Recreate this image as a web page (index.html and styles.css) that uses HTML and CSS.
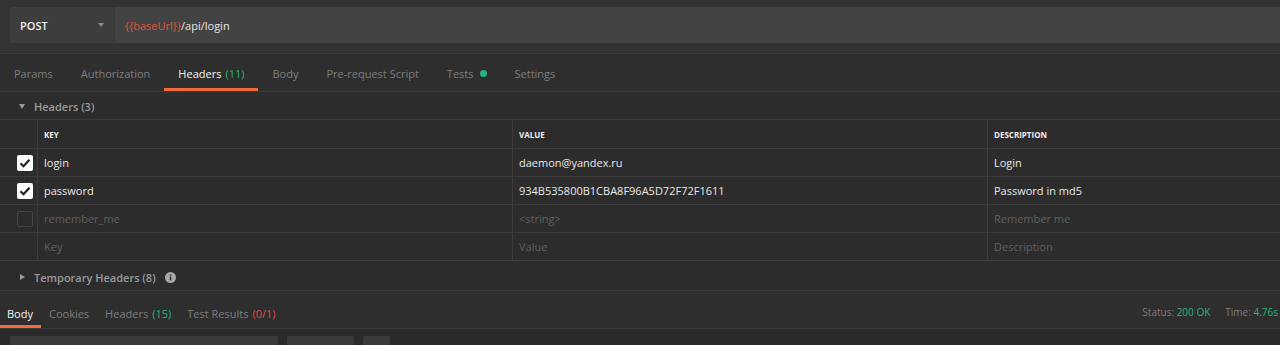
FILE: index.html
```html
<!DOCTYPE html>
<html lang="en">
<head>
  <meta charset="UTF-8">
  <title>Request</title>
  <link rel="stylesheet" href="styles.css">
</head>
<body>
  <div class="url-bar">
    <div class="url-bar__field">
      <div class="method">
        <span class="method__text">POST</span>
        <span class="method__caret"></span>
      </div>
      <div class="url"><span class="url__var">{{baseUrl}}</span>/api/login</div>
    </div>
  </div>

  <nav class="tabs">
    <span class="tabs__item">Params</span>
    <span class="tabs__item">Authorization</span>
    <span class="tabs__item tabs__item--active">Headers <span class="count count--green">(11)</span></span>
    <span class="tabs__item">Body</span>
    <span class="tabs__item">Pre-request Script</span>
    <span class="tabs__item">Tests <span class="dot"></span></span>
    <span class="tabs__item">Settings</span>
  </nav>

  <div class="section">
    <span class="caret caret--down"></span>
    <span class="section__title">Headers (3)</span>
  </div>

  <div class="table">
    <div class="table__row table__row--head">
      <div class="table__cell table__cell--check"></div>
      <div class="table__cell">KEY</div>
      <div class="table__cell">VALUE</div>
      <div class="table__cell">DESCRIPTION</div>
    </div>
    <div class="table__row">
      <div class="table__cell table__cell--check"><span class="checkbox checkbox--on"></span></div>
      <div class="table__cell">login</div>
      <div class="table__cell">daemon@yandex.ru</div>
      <div class="table__cell">Login</div>
    </div>
    <div class="table__row">
      <div class="table__cell table__cell--check"><span class="checkbox checkbox--on"></span></div>
      <div class="table__cell">password</div>
      <div class="table__cell">934B535800B1CBA8F96A5D72F72F1611</div>
      <div class="table__cell">Password in md5</div>
    </div>
    <div class="table__row table__row--off">
      <div class="table__cell table__cell--check"><span class="checkbox"></span></div>
      <div class="table__cell">remember_me</div>
      <div class="table__cell">&lt;string&gt;</div>
      <div class="table__cell">Remember me</div>
    </div>
    <div class="table__row table__row--off">
      <div class="table__cell table__cell--check"></div>
      <div class="table__cell">Key</div>
      <div class="table__cell">Value</div>
      <div class="table__cell">Description</div>
    </div>
  </div>

  <div class="section section--temp">
    <span class="caret caret--right"></span>
    <span class="section__title">Temporary Headers (8)</span>
    <svg class="info" width="11" height="11" viewBox="0 0 11 11">
      <circle cx="5.5" cy="5.5" r="5.5" fill="#a8a8a8"/>
      <rect x="4.8" y="4.6" width="1.5" height="3.8" fill="#2c2c2c"/>
      <rect x="4.8" y="2.4" width="1.5" height="1.4" fill="#2c2c2c"/>
    </svg>
  </div>

  <div class="response">
    <nav class="response__tabs">
      <span class="response__tab response__tab--active">Body</span>
      <span class="response__tab">Cookies</span>
      <span class="response__tab">Headers <span class="count count--green">(15)</span></span>
      <span class="response__tab">Test Results <span class="count count--red">(0/1)</span></span>
    </nav>
    <div class="response__meta">
      <span>Status: <span class="count--green">200 OK</span></span>
      <span>Time: <span class="count--green">4.76s</span></span>
    </div>
  </div>

  <div class="toolbar">
    <span class="toolbar__box toolbar__box--wide"></span>
    <span class="toolbar__box toolbar__box--mid"></span>
    <span class="toolbar__box toolbar__box--small"></span>
  </div>
</body>
</html>
```

FILE: styles.css
```css
:root {
  --bg: #2c2c2c;
  --bg-bar: #333;
  --line: #3c3c3c;
  --text: #e8e8e8;
  --text-dim: #7d7d7d;
  --text-faint: #5f5f5f;
  --green: #26b47f;
  --red: #e34c4c;
  --orange: #f26b3a;
}
* {
  box-sizing: border-box;
}
body {
  margin: 0;
  height: 345px;
  overflow: hidden;
  background-color: var(--bg);
  color: var(--text);
  font-family: 'Open Sans', sans-serif;
  font-size: 11px;
}
.url-bar {
  padding: 7px 0 10px 10px;
  background-color: var(--bg-bar);
  border-bottom: 1px solid #3b3b3b;
}
.url-bar__field {
  display: flex;
  height: 36px;
  background-color: #434343;
  border-radius: 3px 0 0 3px;
}
.method {
  display: flex;
  align-items: center;
  justify-content: space-between;
  width: 105px;
  padding: 0 10px;
  background-color: #3d3d3d;
  border-right: 1px solid #383838;
  border-radius: 3px 0 0 3px;
}
.method__text {
  font-weight: 600;
  font-size: 11px;
  color: #f0f0f0;
}
.method__caret {
  width: 0;
  height: 0;
  border-left: 3.5px solid transparent;
  border-right: 3.5px solid transparent;
  border-top: 4px solid #8a8a8a;
}
.url {
  display: flex;
  align-items: center;
  padding-left: 10px;
  font-size: 11px;
  color: #e6e6e6;
}
.url__var {
  color: #e0553a;
}
.tabs {
  display: flex;
  height: 38px;
  background-color: #2e2e2e;
  border-bottom: 1px solid #3a3a3a;
}
.tabs__item {
  display: flex;
  align-items: center;
  gap: 4px;
  padding: 5px 14px 0;
  color: var(--text-dim);
  border-bottom: 3px solid transparent;
}
.tabs__item--active {
  color: #f5f5f5;
  border-bottom-color: var(--orange);
}
.count--green {
  color: var(--green);
}
.count--red {
  color: var(--red);
}
.dot {
  width: 7px;
  height: 7px;
  margin-left: 2px;
  border-radius: 50%;
  background-color: var(--green);
}
.section {
  display: flex;
  align-items: center;
  height: 27px;
  padding: 2px 0 0 19px;
}
.section__title {
  margin-left: 9px;
  font-weight: 600;
  color: #9a9a9a;
}
.caret {
  width: 0;
  height: 0;
}
.caret--down {
  border-left: 3.5px solid transparent;
  border-right: 3.5px solid transparent;
  border-top: 5px solid #9a9a9a;
}
.caret--right {
  margin-left: 1px;
  border-top: 3.5px solid transparent;
  border-bottom: 3.5px solid transparent;
  border-left: 5px solid #9a9a9a;
}
.info {
  margin-left: 9px;
}
.table {
  border-top: 1px solid var(--line);
}
.table__row {
  display: grid;
  grid-template-columns: 38px 475px 475px 1fr;
  height: 28px;
  border-bottom: 1px solid var(--line);
}
.table__row--head {
  height: 29px;
}
.table__cell {
  display: flex;
  align-items: center;
  padding-left: 6px;
  border-right: 1px solid var(--line);
}
.table__cell:last-child {
  border-right: none;
}
.table__row--head .table__cell {
  font-size: 8px;
  font-weight: 700;
  color: #eee;
  padding-top: 1px;
}
.table__row--off .table__cell {
  color: var(--text-faint);
}
.table__cell--check {
  justify-content: flex-end;
  padding: 0 4px 0 0;
}
.checkbox {
  width: 16px;
  height: 16px;
  border: 1px solid #444;
  border-radius: 2px;
}
.checkbox--on {
  border: none;
  background: #fff url("data:image/svg+xml,%3Csvg xmlns='http://www.w3.org/2000/svg' width='16' height='16'%3E%3Cpath d='M3.5 8.2l3 3 6-6.4' fill='none' stroke='%23222' stroke-width='2.2'/%3E%3C/svg%3E");
}
.section--temp {
  height: 30px;
  padding-top: 3px;
  border-bottom: 1px solid #3a3a3a;
}
.response {
  display: flex;
  justify-content: space-between;
  height: 38px;
  background-color: #2e2e2e;
  border-bottom: 1px solid #3a3a3a;
}
.response__tabs {
  display: flex;
  margin-left: -1px;
}
.response__tab {
  display: flex;
  align-items: center;
  gap: 4px;
  padding: 10px 8px 0;
  color: var(--text-dim);
  border-bottom: 3px solid transparent;
}
.response__tab--active {
  color: #f5f5f5;
  border-bottom-color: var(--orange);
}
.response__meta {
  display: flex;
  align-items: center;
  gap: 15px;
  padding: 4px 2px 0 0;
  font-size: 10px;
  color: var(--text-dim);
}
.toolbar {
  display: flex;
  gap: 9px;
  padding: 7px 0 0 10px;
  background-color: #2a2a2a;
}
.toolbar__box {
  height: 20px;
  background-color: #3a3a3a;
  border-radius: 2px;
}
.toolbar__box--wide {
  width: 268px;
}
.toolbar__box--mid {
  width: 67px;
}
.toolbar__box--small {
  width: 27px;
}
```
